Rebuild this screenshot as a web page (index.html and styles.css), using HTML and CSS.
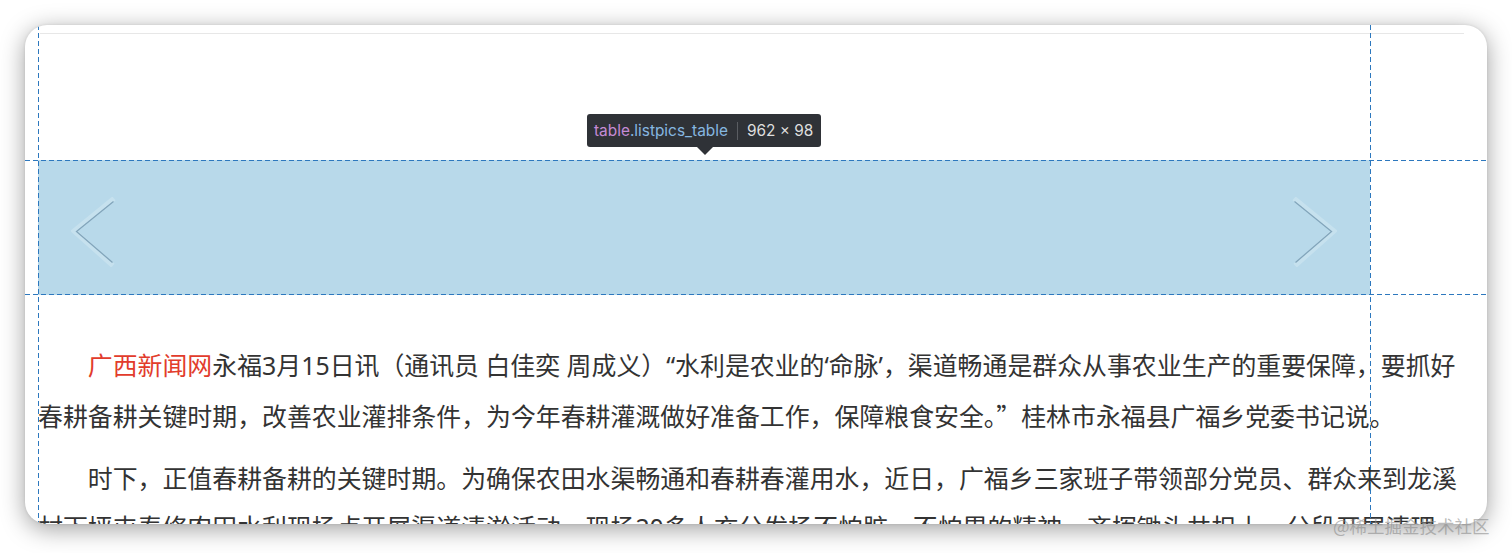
FILE: index.html
```html
<!DOCTYPE html>
<html lang="zh-CN">
<head>
<meta charset="utf-8">
<title>广西新闻网</title>
<link rel="stylesheet" href="styles.css">
</head>
<body>
<div class="stage">
  <div class="card">
    <div class="content">
      <div class="topline"></div>
      <div class="listpics_table">
        <svg class="chev" width="46" height="70" viewBox="0 0 46 70">
          <path class="chev-band" d="M41 3 L3 34 L40 67"/>
          <path class="chev-edge" d="M42.5 4.5 L5.5 34.5 L41.5 65.5"/>
        </svg>
        <svg class="chev" width="46" height="70" viewBox="0 0 46 70">
          <path class="chev-band" d="M5 3 L43 34 L6 67"/>
          <path class="chev-edge" d="M3.5 4.5 L40.5 34.5 L4.5 65.5"/>
        </svg>
      </div>
      <div class="article">
        <p><span class="src">广西新闻网</span>永福3月15日讯（通讯员 白佳奕 周成义）“水利是农业的‘命脉’，渠道畅通是群众从事农业生产的重要保障，要抓好春耕备耕关键时期，改善农业灌排条件，为今年春耕灌溉做好准备工作，保障粮食安全。<span class="fw">”</span>桂林市永福县广福乡党委书记说。</p>
        <p>时下，正值春耕备耕的关键时期。为确保农田水渠畅通和春耕春灌用水，近日，广福乡三家班子带领部分党员、群众来到龙溪村下坪屯春修农田水利现场点开展渠道清淤活动，现场20多人充分发扬不怕脏，不怕累的精神，齐挥锄头共担土，分段开展清理工作。</p>
      </div>
    </div>

    <div class="guide guide-v guide-left"></div>
    <div class="guide guide-v guide-right"></div>
    <div class="guide guide-h guide-top"></div>
    <div class="guide guide-h guide-bottom"></div>

    <div class="tip">
      <span class="tip-tag">table</span><span class="tip-cls">.listpics_table</span>
      <span class="tip-sep"></span>
      <span class="tip-size">962 × 98</span>
    </div>
  </div>
  <div class="watermark">@稀土掘金技术社区</div>
</div>
</body>
</html>
```

FILE: styles.css
```css
html, body {
  margin: 0;
  padding: 0;
  background: #ffffff;
}

body {
  width: 1512px;
  height: 553px;
  overflow: hidden;
}

.stage {
  position: relative;
  padding: 25px;
  height: 553px;
  box-sizing: border-box;
}

.card {
  position: relative;
  width: 1462px;
  height: 499px;
  border-radius: 22px;
  background: #fff;
  overflow: hidden;
  box-shadow: 0 5px 24px rgba(0, 0, 0, 0.38), 0 0 3px rgba(0, 0, 0, 0.1);
}

.content {
  padding: 8px 25px 0 13px;
}

.topline {
  border-top: 1px solid #e7e7e7;
  margin: 0 -2px 0 2px;
}

.listpics_table {
  margin-top: 126px;
  width: 1332px;
  height: 135px;
  background: #b8d9ea;
  display: flex;
  align-items: center;
  justify-content: space-between;
  padding: 8px 33px 0 33px;
  box-sizing: border-box;
}

.chev {
  display: block;
}

.chev-band {
  fill: none;
  stroke: #c6e1ee;
  stroke-width: 5;
  stroke-linecap: square;
  stroke-linejoin: miter;
}

.chev-edge {
  fill: none;
  stroke: #82a5bb;
  stroke-width: 1.3;
  stroke-linejoin: miter;
}

.article {
  width: 1421px;
  margin-top: 46px;
  font-family: "Noto Sans", "Noto Sans CJK SC", sans-serif;
  font-size: 24.9px;
  line-height: 49.8px;
  color: #333333;
}

.article p {
  margin: 0 0 12px 0;
  text-indent: 2em;
}

.src {
  color: #e23c2c;
}

.fw {
  font-family: "Noto Sans CJK SC", sans-serif;
}

/* devtools overlay guides */
.guide {
  position: absolute;
}

.guide-v {
  top: 0;
  bottom: 0;
  width: 1px;
  background: repeating-linear-gradient(to bottom, #2d78be 0 5px, transparent 5px 8px);
}

.guide-h {
  left: 0;
  right: 0;
  height: 1px;
  background: repeating-linear-gradient(to right, #2d78be 0 5px, transparent 5px 8px);
}

.guide-left { left: 13px; }
.guide-right { left: 1345px; }
.guide-top { top: 135px; }
.guide-bottom { top: 269px; }

.tip {
  position: absolute;
  left: 562px;
  top: 89px;
  height: 33px;
  padding: 0 8px 0 7px;
  box-sizing: border-box;
  display: flex;
  align-items: center;
  background: #2f3237;
  border-radius: 3px;
  font-family: "Inter", "Liberation Sans", sans-serif;
  font-size: 15.4px;
  white-space: nowrap;
}

.tip::after {
  content: "";
  position: absolute;
  left: 110px;
  top: 33px;
  border-left: 8px solid transparent;
  border-right: 8px solid transparent;
  border-top: 8px solid #2f3237;
}

.tip-tag {
  color: #c58bd6;
}

.tip-cls {
  color: #86b7e0;
}

.tip-sep {
  width: 1px;
  height: 18px;
  background: #5a5d62;
  margin: 0 9px 0 9px;
}

.tip-size {
  color: #dedede;
}

.watermark {
  position: absolute;
  left: 1333px;
  top: 513px;
  font-family: "Noto Sans CJK SC", sans-serif;
  font-size: 17.5px;
  color: rgba(140, 140, 140, 0.6);
  white-space: nowrap;
}
```
